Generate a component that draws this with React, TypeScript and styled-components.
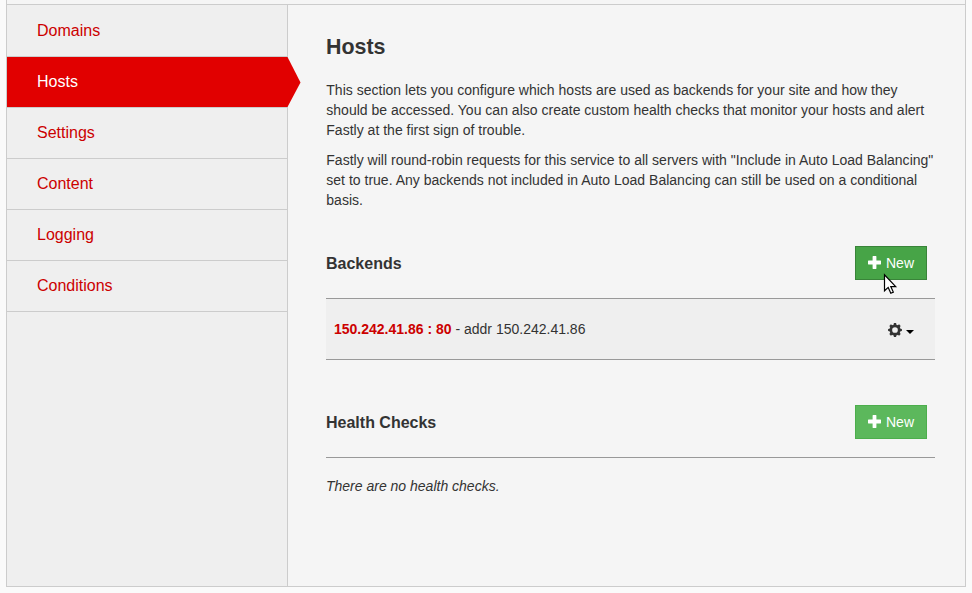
import React from "react";
import styled, { createGlobalStyle } from "styled-components";

const GlobalStyle = createGlobalStyle`
  *, *::before, *::after { box-sizing: border-box; }
  body {
    margin: 0;
    background: #fafafa;
    color: #333;
    font: 14px/20px "Liberation Sans", Arial, sans-serif;
    overflow: hidden;
  }
`;

const Page = styled.div`
  position: relative;
  height: 593px;
  padding: 0 6px 6px;
`;

const Frame = styled.div`
  height: 587px;
  display: flex;
  flex-direction: column;
  border: 1px solid #ccc;
  border-top: 0;
  background: #f5f5f5;
`;

const TopStrip = styled.div`
  flex: 0 0 5px;
  border-bottom: 1px solid #ccc;
`;

const Columns = styled.div`
  flex: 1;
  display: flex;
`;

const Sidebar = styled.nav`
  flex: 0 0 281px;
  padding-top: 1px;
  background: #efefef;
  border-right: 1px solid #ccc;
`;

const NavItem = styled.a<{ $active?: boolean }>`
  position: relative;
  display: block;
  height: 51px;
  padding: 0 30px;
  border-bottom: 1px solid #ccc;
  font-size: 16px;
  line-height: 49px;
  background: ${(p) => (p.$active ? "#e10000" : "transparent")};
  color: ${(p) => (p.$active ? "#fff" : "#cc0000")};
  text-decoration: none;
`;

const NavArrow = styled.svg`
  position: absolute;
  left: 100%;
  top: 0;
  width: 14px;
  height: 50px;
`;

const Content = styled.main`
  flex: 1;
  padding: 30px 30px 0 38px;
`;

const Title = styled.h1`
  margin: 0 0 20px;
  font-size: 21.4px;
  line-height: 25px;
`;

const Paragraph = styled.p`
  margin: 0 0 10px;
  padding-left: 0.3px;
  letter-spacing: 0.01px;
  white-space: nowrap;
`;

const SectionHeader = styled.div<{ $gap: number }>`
  display: flex;
  align-items: center;
  justify-content: space-between;
  height: 53px;
  margin-top: ${(p) => p.$gap}px;
  padding: 0 8px 18px 0;
  border-bottom: 1px solid #999;
`;

const SectionTitle = styled.h2`
  margin: 0;
  padding-top: 2px;
  font-size: 16px;
  line-height: 20px;
`;

const NewButton = styled.button<{ $hovered?: boolean }>`
  display: flex;
  align-items: center;
  gap: 5px;
  width: 72px;
  height: 34px;
  padding: 0 0 0 12px;
  border: 1px solid ${(p) => (p.$hovered ? "#398439" : "#4cae4c")};
  background: ${(p) => (p.$hovered ? "#47a447" : "#5cb85c")};
  color: #fff;
  font: inherit;
`;

const PlusGlyph = styled.svg`
  margin-bottom: 2px;
`;

const BackendRow = styled.div`
  display: flex;
  align-items: center;
  justify-content: space-between;
  height: 61px;
  padding: 0 21px 0 8px;
  background: #efefef;
  border-bottom: 1px solid #999;
`;

const BackendName = styled.strong`
  color: #cc0000;
`;

const RowMenu = styled.span`
  display: flex;
  align-items: center;
  gap: 4px;
  padding-top: 1px;
`;

const Caret = styled.span`
  margin-top: 5px;
  border: 4px solid transparent;
  border-top-color: #000;
  border-bottom: 0;
`;

const EmptyNote = styled.p`
  margin: 18px 0 0;
  font-style: italic;
`;

const Pointer = styled.svg`
  position: absolute;
  left: 883px;
  top: 273px;
`;

const PlusIcon = () => (
  <PlusGlyph width="13" height="13" viewBox="0 0 13 13" fill="#fff">
    <path d="M5 0h3q.4 0 .4.4v4.2h4.2q.4 0 .4.4v3q0 .4-.4.4H8.4v4.2q0 .4-.4.4H5q-.4 0-.4-.4V8.4H.4Q0 8.4 0 8V5q0-.4.4-.4h4.2V.4Q4.600 0 5 0z" />
  </PlusGlyph>
);

const GearIcon = () => (
  <svg width="14" height="14" viewBox="0 0 14 14">
    <circle cx="7" cy="7" r="4.200" fill="none" stroke="#333" strokeWidth="2.700" />
    <g fill="#333">
      {[0, 45, 90, 135, 180, 225, 270, 315].map((angle) => (
        <path key={angle} transform={`rotate(${angle} 7 7)`} d="M5.500 2.600 5.900 .1h2.200l.4 2.500z" />
      ))}
    </g>
  </svg>
);

const links = ["Domains", "Hosts", "Settings", "Content", "Logging", "Conditions"];

export default function App() {
  return (
    <Page>
      <GlobalStyle />
      <Frame>
        <TopStrip />
        <Columns>
          <Sidebar>
            {links.map((label) => (
              <NavItem key={label} $active={label === "Hosts"}>
                {label}
                {label === "Hosts" && (
                  <NavArrow viewBox="0 0 14 50">
                    <path d="M0 0h.5L13.500 25.500.5 50H0z" fill="#e10000" />
                  </NavArrow>
                )}
              </NavItem>
            ))}
          </Sidebar>
          <Content>
            <Title>Hosts</Title>
            <Paragraph>
              This section lets you configure which hosts are used as backends for your site and how they
              <br />
              should be accessed. You can also create custom health checks that monitor your hosts and alert
              <br />
              Fastly at the first sign of trouble.
            </Paragraph>
            <Paragraph>
              Fastly will round-robin requests for this service to all servers with "Include in Auto Load Balancing"
              <br />
              set to true. Any backends not included in Auto Load Balancing can still be used on a conditional
              <br />
              basis.
            </Paragraph>
            <SectionHeader $gap={36}>
              <SectionTitle>Backends</SectionTitle>
              <NewButton $hovered>
                <PlusIcon />
                New
              </NewButton>
            </SectionHeader>
            <BackendRow>
              <span>
                <BackendName>150.242.41.86 : 80</BackendName> - addr 150.242.41.86
              </span>
              <RowMenu>
                <GearIcon />
                <Caret />
              </RowMenu>
            </BackendRow>
            <SectionHeader $gap={45}>
              <SectionTitle>Health Checks</SectionTitle>
              <NewButton>
                <PlusIcon />
                New
              </NewButton>
            </SectionHeader>
            <EmptyNote>There are no health checks.</EmptyNote>
          </Content>
        </Columns>
      </Frame>
      <Pointer width="15" height="22" viewBox="0 0 15 22">
        <path
          d="M1.500 1.800v16l3.700-3.400 2.600 5.800 2.500-1.100-2.500-5.500h4.900z"
          fill="#fff"
          stroke="#000"
          strokeWidth="1.200"
        />
      </Pointer>
    </Page>
  );
}
